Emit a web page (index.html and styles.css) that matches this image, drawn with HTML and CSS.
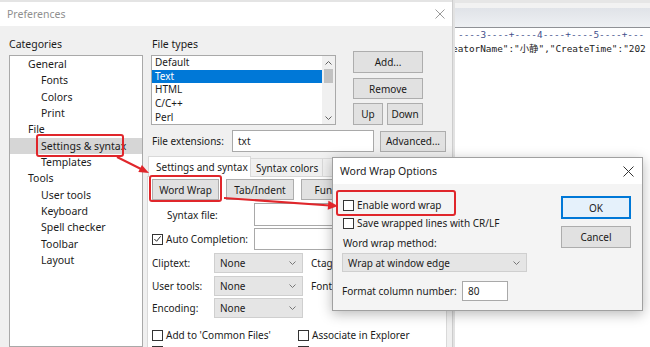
FILE: index.html
```html
<!DOCTYPE html>
<html>
<head>
<meta charset="utf-8">
<title>Preferences</title>
<link rel="stylesheet" href="styles.css">
</head>
<body>
<div class="desk">
  <div class="prefs">
    <div class="titlebar">
      <span class="title">Preferences</span>
      <svg class="xclose" width="10" height="10" viewBox="0 0 10 10"><path d="M0.5 0.5L9.5 9.5M9.5 0.5L0.5 9.5" stroke="#9a9a9a" stroke-width="1" fill="none"/></svg>
    </div>
    <div class="pbody">
      <div class="catcol">
        <div class="lbl">Categories</div>
        <ul class="tree">
          <li class="l1">General</li>
          <li class="l2">Fonts</li>
          <li class="l2">Colors</li>
          <li class="l2">Print</li>
          <li class="l1">File</li>
          <li class="l2 sel">Settings &amp; syntax</li>
          <li class="l2">Templates</li>
          <li class="l1">Tools</li>
          <li class="l2">User tools</li>
          <li class="l2">Keyboard</li>
          <li class="l2">Spell checker</li>
          <li class="l2">Toolbar</li>
          <li class="l2">Layout</li>
        </ul>
      </div>
      <div class="maincol">
        <div class="ftgrid">
          <div class="lbl ftlbl">File types</div>
          <div class="listbox">
            <ul class="items">
              <li>Default</li>
              <li class="sel">Text</li>
              <li>HTML</li>
              <li>C/C++</li>
              <li>Perl</li>
            </ul>
            <div class="vscroll">
              <svg width="7" height="4" viewBox="0 0 7 4"><path d="M0.5 3.5L3.5 0.5L6.5 3.5" stroke="#606060" fill="none"/></svg>
              <div class="thumb"></div>
              <div class="track"></div>
              <svg width="7" height="4" viewBox="0 0 7 4"><path d="M0.5 0.5L3.5 3.5L6.5 0.5" stroke="#606060" fill="none"/></svg>
            </div>
          </div>
          <div class="btncol">
            <div class="btn b-add">Add...</div>
            <div class="btn b-rem">Remove</div>
            <div class="updown">
              <div class="btn b-up">Up</div>
              <div class="btn b-down">Down</div>
            </div>
          </div>
        </div>
        <div class="extrow">
          <span class="extlbl">File extensions:</span>
          <div class="input ext">txt</div>
          <div class="btn b-adv">Advanced...</div>
        </div>
        <div class="tabs">
          <div class="tab active">Settings and syntax</div>
          <div class="tab">Syntax colors</div>
          <div class="tab t3"></div>
        </div>
        <div class="panel">
          <div class="subbtns">
            <div class="btn sb">Word Wrap</div>
            <div class="btn sb">Tab/Indent</div>
            <div class="btn sb">Function</div>
          </div>
          <div class="frow">
            <span class="flbl ind">Syntax file:</span>
            <div class="input wide tall"></div>
          </div>
          <div class="frow f2">
            <span class="flbl chkl"><span class="cb on"><svg width="10" height="10" viewBox="0 0 10 10"><path d="M1.5 5L4 7.5L8.5 2" stroke="#222" stroke-width="1.1" fill="none"/></svg></span>Auto Completion:</span>
            <div class="input wide"></div>
          </div>
          <div class="srow s1">
            <span class="slbl">Cliptext:</span>
            <div class="select"><span>None</span><svg width="7" height="4" viewBox="0 0 7 4"><path d="M0.5 0.5L3.5 3.5L6.5 0.5" stroke="#777" fill="none"/></svg></div>
            <span class="rlbl">Ctags:</span>
          </div>
          <div class="srow">
            <span class="slbl">User tools:</span>
            <div class="select"><span>None</span><svg width="7" height="4" viewBox="0 0 7 4"><path d="M0.5 0.5L3.5 3.5L6.5 0.5" stroke="#777" fill="none"/></svg></div>
            <span class="rlbl">Font:</span>
          </div>
          <div class="srow">
            <span class="slbl">Encoding:</span>
            <div class="select"><span>None</span><svg width="7" height="4" viewBox="0 0 7 4"><path d="M0.5 0.5L3.5 3.5L6.5 0.5" stroke="#777" fill="none"/></svg></div>
          </div>
          <div class="chkrow">
            <span class="chk c1"><span class="cb"></span>Add to 'Common Files'</span>
            <span class="chk"><span class="cb"></span>Associate in Explorer</span>
          </div>
          <div class="chkrow">
            <span class="chk c1"><span class="cb"></span></span>
            <span class="chk"><span class="cb"></span></span>
          </div>
        </div>
      </div>
    </div>
  </div>

  <div class="editor">
    <div class="etop"></div>
    <div class="ebar"></div>
    <div class="ruler">----3----+----4----+----5----+---</div>
    <div class="eline">eatorName":"小静","CreateTime":"202</div>
  </div>

  <div class="wwdlg">
    <div class="wwtitle">
      <span>Word Wrap Options</span>
      <svg width="11" height="11" viewBox="0 0 11 11"><path d="M0.5 0.5L10.5 10.5M10.5 0.5L0.5 10.5" stroke="#333" stroke-width="1" fill="none"/></svg>
    </div>
    <div class="wwbody">
      <div class="wwleft">
        <div class="wrow"><span class="cb"></span>Enable word wrap</div>
        <div class="wrow"><span class="cb"></span>Save wrapped lines with CR/LF</div>
        <div class="wrow">Word wrap method:</div>
        <div class="select wsel"><span>Wrap at window edge</span><svg width="7" height="4" viewBox="0 0 7 4"><path d="M0.5 0.5L3.5 3.5L6.5 0.5" stroke="#777" fill="none"/></svg></div>
        <div class="fcrow">
          <span>Format column number:</span>
          <div class="input num">80</div>
        </div>
      </div>
      <div class="wwright">
        <div class="btn ok">OK</div>
        <div class="btn cancel">Cancel</div>
      </div>
    </div>
  </div>

  <svg class="annot" width="650" height="347" viewBox="0 0 650 347">
    <g fill="none" stroke="#e0262b" stroke-width="2">
      <rect x="37" y="135" width="86" height="21" rx="2"/>
      <rect x="150" y="176" width="71" height="25" rx="2"/>
      <rect x="337" y="191" width="118" height="24" rx="2"/>
      <line x1="117" y1="157" x2="142" y2="169.5"/>
      <line x1="224" y1="198" x2="330" y2="205.5"/>
    </g>
    <g fill="#e0262b">
      <polygon points="149,173 138.3,172.1 141.9,164.9"/>
      <polygon points="338,206 327.7,209.8 328.4,200.8"/>
    </g>
  </svg>
</div>
</body>
</html>
```
FILE: styles.css
```css
* { box-sizing: border-box; margin: 0; padding: 0; }
html, body { width: 650px; height: 347px; overflow: hidden; }
body {
  font-family: "Noto Sans", "Liberation Sans", sans-serif;
  font-size: 10px;
  color: #1b1b1b;
  background: #fff;
  line-height: 1;
  white-space: nowrap;
}
ul { list-style: none; }

.desk { position: relative; width: 650px; height: 347px; display: flex; overflow: hidden; }

/* ---------- Preferences dialog ---------- */
.prefs {
  width: 453px; flex: none;
  display: flex; flex-direction: column;
  background: #f0f0f0;
  border-right: 1px solid #cdcdcd;
}
.titlebar {
  height: 26px; flex: none;
  background: #fff;
  border-top: 2px solid #e4e4e4;
  display: flex; align-items: center; justify-content: space-between;
  padding: 0 7px 0 7px;
}
.title { color: #8f8f8f; font-size: 10.5px; }

.pbody { flex: 1; display: flex; padding: 11px 0 0 9px; gap: 4px; min-height: 0; }
.catcol { width: 134px; display: flex; flex-direction: column; }
.lbl { height: 18px; line-height: 14px; font-size: 10.5px; }
.tree {
  flex: 1; background: #fff;
  border: 1px solid #a9a9a9;
}
.tree li { height: 16.33px; line-height: 16.33px; font-size: 10.5px; }
.tree .l1 { padding-left: 18px; }
.tree .l2 { padding-left: 31px; }
.tree .sel { background: #d6d6d6; }

.maincol { flex: 1; display: flex; flex-direction: column; min-width: 0; }

.ftgrid {
  margin-left: 4px;
  display: grid;
  grid-template-columns: 185px 70px;
  grid-template-rows: 18px 70px;
  column-gap: 17px;
}
.ftlbl { grid-column: 1; grid-row: 1; padding-left: 1px; }
.listbox {
  grid-column: 1; grid-row: 2;
  background: #fff; border: 1px solid #a9a9a9;
  display: flex;
}
.items { flex: 1; }
.items li { height: 13.7px; line-height: 13.7px; padding-left: 3px; }
.items .sel { background: #0078d7; color: #fff; }
.vscroll {
  width: 13px; flex: none; background: #f0f0f0;
  display: flex; flex-direction: column; align-items: center;
  padding: 5px 0 4px;
}
.thumb { width: 9px; height: 14px; background: #c2c2c2; margin-top: 4px; }
.track { flex: 1; }

.btncol { grid-column: 2; grid-row: 1 / 3; align-self: end; display: flex; flex-direction: column; }
.btn {
  background: #e1e1e1; border: 1px solid #adadad;
  display: flex; align-items: center; justify-content: center;
  overflow: hidden;
}
.b-add { height: 22px; }
.b-rem { height: 21px; margin-top: 5px; }
.updown { display: flex; gap: 4px; margin-top: 4px; }
.b-up { width: 30px; height: 22px; }
.b-down { width: 36px; height: 22px; }

.extrow { display: flex; align-items: center; margin-top: 5px; height: 22px; padding-left: 5px; }
.extlbl { width: 80px; flex: none; }
.input { background: #fff; border: 1px solid #a9a9a9; display: flex; align-items: center; padding-left: 5px; }
.ext { width: 142px; height: 22px; }
.b-adv { width: 66px; height: 21px; margin-left: 6px; }

.tabs { display: flex; align-items: flex-end; margin-top: 4px; padding-left: 1px; height: 20px; position: relative; z-index: 1; }
.tab {
  height: 18px; border: 1px solid #d9d9d9; border-bottom: none;
  background: #f0f0f0; padding: 0 5px; display: flex; align-items: center;
  margin-left: -1px; overflow: hidden;
}
.tab.active { height: 21px; margin-bottom: -1px; background: #fff; width: 103px; padding-left: 7px; margin-left: 0; }
.tab:nth-child(2) { width: 73px; }
.tab.t3 { width: 60px; }

.panel {
  flex: 1; width: 300px;
  background: #fff; border: 1px solid #d9d9d9; border-bottom: none;
  padding-left: 4px;
}
.subbtns { display: flex; gap: 7px; padding-top: 2px; }
.sb { height: 21px; width: 67px; }
.sb:nth-child(2) { width: 68px; }
.sb:nth-child(3) { width: 68px; }

.frow { display: flex; align-items: center; margin-top: 3px; height: 23px; }
.frow.f2 { margin-top: 2px; height: 22px; }
.flbl { width: 102px; flex: none; display: flex; align-items: center; }
.flbl.ind { padding-left: 15px; }
.input.wide { width: 190px; height: 100%; }

.cb {
  width: 11px; height: 11px; flex: none;
  border: 1px solid #333; background: #fff;
  display: inline-flex; align-items: center; justify-content: center;
  margin-right: 3px;
}
.cb svg { display: block; }

.srow { display: flex; align-items: center; height: 20px; margin-top: 2.5px; }
.srow.s1 { margin-top: 3px; }
.slbl { width: 62px; flex: none; }
.select {
  width: 89px; height: 100%;
  background: #e5e5e5; border: 1px solid #cfcfcf;
  display: flex; align-items: center; justify-content: space-between;
  padding: 0 6px 0 5px;
}
.rlbl { margin-left: 8px; }

.chkrow { display: flex; align-items: center; height: 12px; margin-top: 11px; }
.chkrow + .chkrow { margin-top: 4px; }
.chk { display: flex; align-items: center; }
.chk.c1 { width: 146px; }

/* ---------- Editor ---------- */
.editor {
  flex: 1; min-width: 0; overflow: hidden;
  background: #fff;
  border-left: 2px solid #e2e2e2;
  display: flex; flex-direction: column;
}
.etop { height: 8px; background: #f2f2f2; border-top: 3px solid #e6e6e6; }
.ebar { height: 20px; background: linear-gradient(#e0e3e8, #eef0f3); border-bottom: 1px solid #8f9196; }
.ruler {
  font-family: "DejaVu Sans Mono", "Liberation Mono", monospace;
  font-size: 9.4px; line-height: 11px; height: 11px;
  color: #3f4f8c; padding-left: 3px; margin-top: 1px;
}
.eline {
  font-family: "DejaVu Sans Mono", "Noto Sans CJK SC", monospace;
  font-size: 9.4px; line-height: 12px; height: 12px;
  color: #222; margin-top: 3px; margin-left: -3px;
}

/* ---------- Word Wrap Options ---------- */
.wwdlg {
  position: absolute; left: 332px; top: 157px; z-index: 5;
  width: 311px; height: 154px;
  border: 1px solid #a0a0a0;
  background: #f4f4f4;
  box-shadow: 0 3px 12px rgba(0,0,0,0.28);
  display: flex; flex-direction: column;
}
.wwtitle {
  height: 26px; flex: none; background: #fff;
  display: flex; align-items: center; justify-content: space-between;
  padding: 0 8px 0 7px; font-size: 10.5px;
}
.wwbody { flex: 1; display: flex; justify-content: space-between; padding: 0 11px 0 9px; }
.wwleft { padding-top: 12px; display: flex; flex-direction: column; }
.wrow { height: 18px; display: flex; align-items: center; padding-left: 1px; }
.wrow .cb { margin-right: 3px; }
.wrow:nth-child(3) { margin-top: 2px; }
.wsel { width: 185px; height: 19px; margin-top: 1px; }
.fcrow { display: flex; align-items: center; margin-top: 9px; height: 20px; }
.fcrow span { width: 120px; flex: none; }
.num { width: 46px; height: 20px; }
.wwright { padding-top: 12px; display: flex; flex-direction: column; }
.ok { width: 70px; height: 23px; background: #e5f1fb; border: 1px solid #0078d7; box-shadow: inset 0 0 0 1px #0078d7; }
.cancel { width: 70px; height: 22px; margin-top: 7px; }

.annot { position: absolute; left: 0; top: 0; z-index: 6; pointer-events: none; }
```
